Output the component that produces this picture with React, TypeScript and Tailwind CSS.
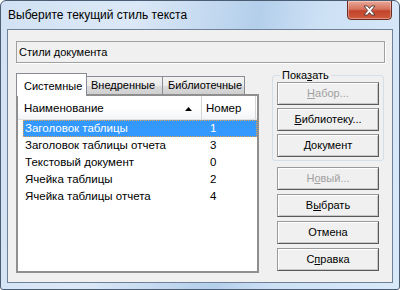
import React from "react";

const rows = [
  { name: "Заголовок таблицы", num: "1" },
  { name: "Заголовок таблицы отчета", num: "3" },
  { name: "Текстовый документ", num: "0" },
  { name: "Ячейка таблицы", num: "2" },
  { name: "Ячейка таблицы отчета", num: "4" },
];

function Btn({ children, disabled }: { children: React.ReactNode; disabled?: boolean }) {
  return (
    <div
      className={
        "h-[23px] w-[102px] flex items-center justify-center border border-[#9a9a9a] border-b-[#5a5a5a] border-r-[#5a5a5a] bg-[#f0f0f0] shadow-[inset_1px_1px_0_#ffffff,inset_-1px_-1px_0_#c8c8c8] text-[11px] " +
        (disabled ? "text-[#a0a0a0]" : "text-black")
      }
    >
      {children}
    </div>
  );
}

export default function App() {
  return (
    <div
      className="w-[400px] h-[290px] flex flex-col border border-[#4b5d72] rounded-t-[6px] rounded-b-[3px] overflow-hidden bg-[linear-gradient(100deg,#d2e2f4_0%,#dbe8f7_30%,#b4cfeb_58%,#cde1f5_72%,#d9e9fa_100%)]"
      style={{ fontFamily: '"Liberation Sans", Arial, sans-serif' }}
    >
      {/* title bar */}
      <div className="h-[28px] flex items-start justify-between shrink-0">
        <span className="pl-[7px] pt-[7px] text-[12px] leading-[14px] text-black">
          Выберите текущий стиль текста
        </span>
        <div className="mr-[7px] -mt-px w-[45px] h-[20px] rounded-b-[4px] border border-[#6b2b20] bg-[linear-gradient(180deg,#e9a797_0%,#d6745f_45%,#c2442b_55%,#cf5a3e_100%)] flex items-center justify-center shadow-[inset_0_0_0_1px_rgba(255,255,255,0.35)]">
          <svg width="13" height="11" viewBox="0 0 13 11">
            <path
              d="M1 1 H4.5 L6.5 3.5 L8.5 1 H12 L8.3 5.5 L12 10 H8.5 L6.5 7.5 L4.5 10 H1 L4.7 5.5 Z"
              fill="#ffffff"
              stroke="#4a3a38"
              strokeWidth="0.9"
              strokeLinejoin="round"
            />
          </svg>
        </div>
      </div>

      {/* client area */}
      <div className="flex-1 mx-[6px] mb-[6px] border border-[#6e8196] bg-[#f0f0f0] pl-[8px] pr-[7px] pt-[11px] flex flex-col text-[11px] text-black">
        <div className="h-[22px] border border-[#a0a0a0] shadow-[1px_1px_0_#ffffff] flex items-center pl-[2px]">
          Стили документа
        </div>

        <div className="flex mt-[10px] gap-[13px]">
          {/* left: tabs + list */}
          <div className="w-[243px] flex flex-col">
            <div className="h-[21px] flex items-end">
              <div className="relative z-10 h-[23px] w-[71px] -mb-[2px] bg-white border border-b-0 border-[#898c95] flex items-start pt-[4px] pl-[7px] text-[11px]">
                Системные
              </div>
              <div className="h-[18px] w-[76px] border border-l-0 border-b-0 border-[#898c95] bg-[linear-gradient(180deg,#f3f3f3_0%,#ebebeb_50%,#dcdcdc_51%,#cfcfcf_100%)] flex items-center pl-[4px] text-[11px]">
                Внедренные
              </div>
              <div className="h-[18px] w-[82px] border border-l-0 border-b-0 border-[#898c95] bg-[linear-gradient(180deg,#f3f3f3_0%,#ebebeb_50%,#dcdcdc_51%,#cfcfcf_100%)] flex items-center pl-[5px] text-[11px]">
                Библиотечные
              </div>
            </div>

            <div className="h-[179px] border-2 border-[#8f8f8f] bg-white flex flex-col">
              <div className="h-[24px] flex bg-[linear-gradient(180deg,#ffffff_0%,#ffffff_50%,#f4f5f7_100%)] border-b border-[#e0e0e0] text-[11.5px]">
                <div className="w-[184px] flex items-center justify-between pl-[6px] pr-[9px] pt-[2px] border-r border-[#d5d5d5]">
                  <span>Наименование</span>
                  <svg width="7" height="4" viewBox="0 0 7 4">
                    <path d="M0 4 L3.5 0 L7 4 Z" fill="#000" />
                  </svg>
                </div>
                <div className="w-[54px] flex items-center pl-[4px] pt-[2px] border-r border-[#d5d5d5]">Номер</div>
              </div>
              <div className="flex flex-col pl-[5px]">
                {rows.map((r, i) => (
                  <div
                    key={r.name}
                    className={
                      "h-[17px] flex items-center text-[11.5px] " +
                      (i === 0
                        ? "bg-[#3399ff] text-white border border-dotted border-[#e0a050]"
                        : "text-black border border-transparent")
                    }
                  >
                    <span className="w-[185px] pl-px">{r.name}</span>
                    <span className="pl-px">{r.num}</span>
                  </div>
                ))}
              </div>
            </div>
          </div>

          {/* right: buttons */}
          <div className="w-[112px] flex flex-col -mt-[5px]">
            <fieldset className="border border-[#d5dfe5] rounded-[3px] px-[4px] pb-[3px] flex flex-col gap-[3px]">
              <legend className="ml-[3px] px-[2px] text-[11px] leading-[14px]">
                Пока<u>з</u>ать
              </legend>
              <Btn disabled>
                <u>Н</u>абор...
              </Btn>
              <Btn>
                <u>Б</u>иблиотеку...
              </Btn>
              <Btn>
                <u>Д</u>окумент
              </Btn>
            </fieldset>
            <div className="flex flex-col gap-[4px] mt-[6px] pl-[5px]">
              <Btn disabled>
                Н<u>о</u>вый...
              </Btn>
              <Btn>
                В<u>ы</u>брать
              </Btn>
              <Btn>Отмена</Btn>
              <Btn>
                С<u>п</u>равка
              </Btn>
            </div>
          </div>
        </div>
      </div>
    </div>
  );
}
